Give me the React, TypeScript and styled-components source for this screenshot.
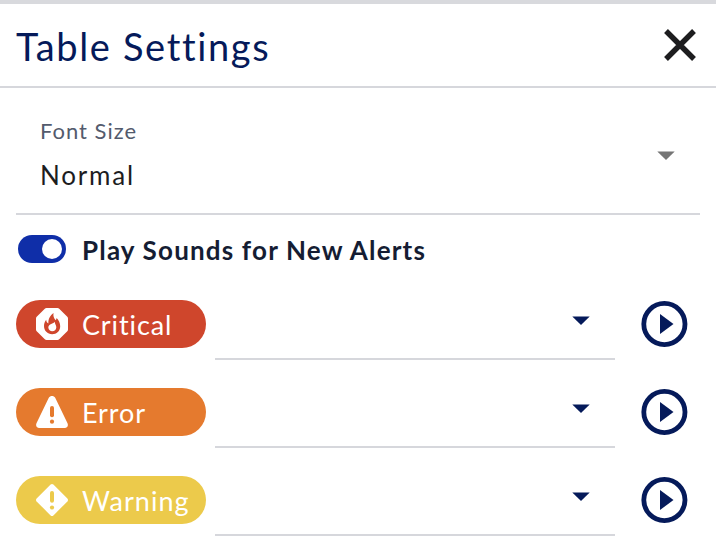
import React from "react";
import styled, { createGlobalStyle } from "styled-components";

const GlobalStyle = createGlobalStyle`
  * { box-sizing: border-box; }
  body { margin: 0; background: #fff; font-family: Lato, "Open Sans", sans-serif; overflow: hidden; }
`;

const Panel = styled.main`
  width: 716px;
  height: 556px;
  border-top: 4px solid #d8d9dd;
  background: #fff;
`;

const Header = styled.header`
  display: flex;
  align-items: center;
  justify-content: space-between;
  height: 84px;
  padding: 0 8px 0 16px;
  border-bottom: 2px solid #d6d7dc;
`;

const Title = styled.h1`
  margin: 2px 0 0;
  color: #051a5a;
  font-size: 38px;
  font-weight: 400;
  line-height: 46px;
  letter-spacing: 1.65px;
  white-space: nowrap;
`;

const IconButton = styled.button`
  display: flex;
  flex: none;
  width: 56px;
  height: 56px;
  padding: 0;
  border: 0;
  background: none;
  color: #051a5a;
`;

const Field = styled.div`
  display: flex;
  justify-content: space-between;
  height: 127px;
  margin: 0 16px;
  padding: 29px 25px 0 24px;
  border-bottom: 2px solid #d6d7dc;
`;

const FieldLabel = styled.div`
  color: #535b6d;
  font-size: 22px;
  line-height: 28px;
  letter-spacing: 1px;
`;

const FieldValue = styled.div`
  margin-top: 14px;
  color: #1d1d1f;
  font-size: 26px;
  line-height: 32px;
  letter-spacing: 1.8px;
`;

const FieldArrow = styled.div`
  margin-top: 34px;
  height: 9px;
  line-height: 0;
`;

const ToggleRow = styled.label`
  display: flex;
  align-items: center;
  height: 30px;
  margin: 19px 18px 0;
`;

const Switch = styled.span`
  display: flex;
  justify-content: flex-end;
  width: 48px;
  height: 28px;
  padding: 4px;
  border-radius: 14px;
  background: #0f2ea8;
`;

const Knob = styled.span`
  width: 20px;
  height: 20px;
  border-radius: 50%;
  background: #fff;
`;

const ToggleText = styled.span`
  margin: 1px 0 0 16px;
  color: #151d33;
  font-size: 26px;
  font-weight: 700;
  line-height: 32px;
  letter-spacing: 1.18px;
  white-space: nowrap;
`;

const Alerts = styled.section`
  display: flex;
  flex-direction: column;
  gap: 28px;
  padding: 36px 0 0 16px;
`;

const AlertRow = styled.div`
  display: flex;
  height: 60px;
`;

const Pill = styled.div<{ $color: string }>`
  display: flex;
  align-items: center;
  width: 190px;
  height: 48px;
  padding-left: 20px;
  border-radius: 24px;
  background: ${(p) => p.$color};
`;

const PillText = styled.span<{ $spacing: number }>`
  margin: 1px 0 0 14px;
  color: #fff;
  font-size: 27px;
  line-height: 32px;
  letter-spacing: ${(p) => p.$spacing}px;
`;

const SoundSelect = styled.div`
  display: flex;
  justify-content: flex-end;
  width: 400px;
  margin-left: 9px;
  padding: 16px 25px 0 0;
  border-bottom: 2px solid #d6d7dc;
`;

const PlayButton = styled(IconButton)`
  margin: -4px 0 0 21px;
`;

const Arrow = ({ color }: { color: string }) => (
  <svg width="18" height="9" viewBox="0 0 18 9" fill={color}>
    <path d="M.3.4h17.4L9 9z" />
  </svg>
);

const CriticalIcon = () => (
  <svg width="32" height="32" viewBox="0 0 32 32">
    <path fill="#fff" d="M10.5 0h11q1 0 1.7.7l8.1 8.1q.7.7.7 1.7v11q0 1-.7 1.7l-8.1 8.1q-.7.7-1.7.7h-11q-1 0-1.7-.7L.7 23.2Q0 22.5 0 21.5v-11q0-1 .7-1.7L8.8.7Q9.5 0 10.5 0z" />
    <path fill="#cf462c" d="M17.5 5c-.5 3.3.4 5.1 2.2 7.2.5-.7.8-1.3.9-2.2 2.2 2.4 3.6 5.2 3.6 8.2 0 4.8-3.5 8-8.1 8S8 22.8 8 18.1c0-2.3.7-4.4 2.2-6.3.1 1.8.7 3 2.2 3.8-.3-4.6 1.8-8.2 5.1-10.6z" />
    <path fill="#fff" d="M18.6 13.8c-1 1.6-2.5 1.6-4 2.4-1.8.9-2.5 2.3-2.2 3.9.3 2 1.8 3.1 3.8 3.1 2.3 0 4-1.5 4.1-3.8.1-2-1.4-3.2-1.7-5.6z" />
  </svg>
);

const ErrorIcon = () => (
  <svg width="32" height="32" viewBox="0 0 32 32">
    <path fill="#fff" d="M12.8 1.8C14.2-.6 17.8-.6 19.2 1.8l12.2 25.3c1.2 2.5.1 4.9-2.7 4.9H3.3C.5 32-.6 29.6.6 27.1z" />
    <path stroke="#e57a2e" strokeWidth="4" strokeLinecap="round" d="M16 12v7.2" />
    <circle cx="16" cy="25.7" r="2.1" fill="#e57a2e" />
  </svg>
);

const WarningIcon = () => (
  <svg width="32" height="32" viewBox="0 0 32 32">
    <path fill="#fff" d="M14.6.6q1.4-1.2 2.8 0l14 14q1.2 1.4 0 2.8l-14 14q-1.4 1.2-2.8 0l-14-14q-1.2-1.4 0-2.8z" />
    <path stroke="#ecca4b" strokeWidth="4" strokeLinecap="round" d="M16 9v7.8" />
    <circle cx="16" cy="23.5" r="2.1" fill="#ecca4b" />
  </svg>
);

const alerts = [
  { name: "Critical", color: "#cf462c", spacing: 0.9, icon: <CriticalIcon /> },
  { name: "Error", color: "#e57a2e", spacing: 0.9, icon: <ErrorIcon /> },
  { name: "Warning", color: "#ecca4b", spacing: 1.05, icon: <WarningIcon /> },
];

export default function App() {
  return (
    <>
      <GlobalStyle />
      <Panel>
        <Header>
          <Title>Table Settings</Title>
          <IconButton aria-label="Close">
            <svg width="56" height="56" viewBox="0 0 56 56" stroke="#1d1d1f" strokeWidth="5.4">
              <path d="M14 14l28 28M42 14L14 42" />
            </svg>
          </IconButton>
        </Header>
        <Field>
          <div>
            <FieldLabel>Font Size</FieldLabel>
            <FieldValue>Normal</FieldValue>
          </div>
          <FieldArrow>
            <Arrow color="#757575" />
          </FieldArrow>
        </Field>
        <ToggleRow>
          <Switch>
            <Knob />
          </Switch>
          <ToggleText>Play Sounds for New Alerts</ToggleText>
        </ToggleRow>
        <Alerts>
          {alerts.map((a) => (
            <AlertRow key={a.name}>
              <Pill $color={a.color}>
                {a.icon}
                <PillText $spacing={a.spacing}>{a.name}</PillText>
              </Pill>
              <SoundSelect>
                <Arrow color="#051a5a" />
              </SoundSelect>
              <PlayButton aria-label={`Play ${a.name} sound`}>
                <svg width="56" height="56" viewBox="0 0 56 56">
                  <circle cx="28.4" cy="28" r="20.6" fill="none" stroke="#051a5a" strokeWidth="4.8" />
                  <path d="M24 18v20l13.5-10z" fill="#051a5a" />
                </svg>
              </PlayButton>
            </AlertRow>
          ))}
        </Alerts>
      </Panel>
    </>
  );
}
